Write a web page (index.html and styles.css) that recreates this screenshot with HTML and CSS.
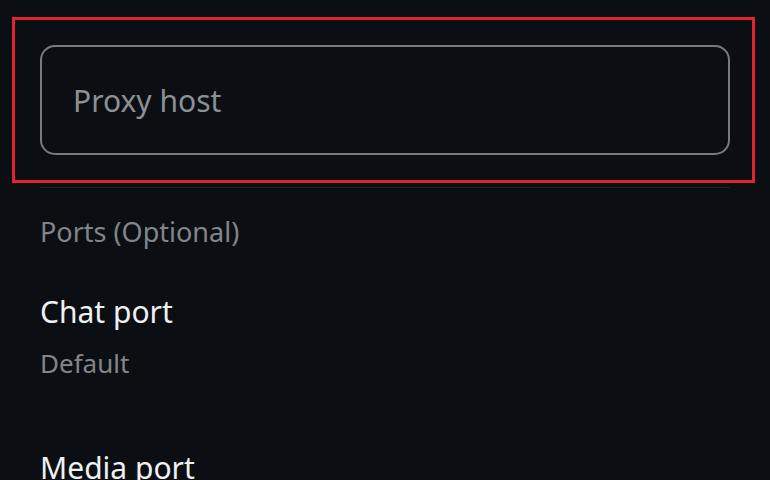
FILE: index.html
```html
<!DOCTYPE html>
<html lang="en">
<head>
    <meta charset="UTF-8">
    <meta name="viewport" content="width=device-width, initial-scale=1.0">
    <title>Proxy settings</title>
    <link rel="stylesheet" href="styles.css">
</head>
<body>
    <div class="screen">
        <div class="host-row">
            <div class="field">
                <span class="placeholder">Proxy host</span>
            </div>
            <div class="highlight"></div>
        </div>
        <div class="divider"></div>

        <div class="section-title">Ports (Optional)</div>

        <div class="pref">
            <div class="pref-title">Chat port</div>
            <div class="pref-summary">Default</div>
        </div>

        <div class="pref">
            <div class="pref-title">Media port</div>
        </div>
    </div>
</body>
</html>
```

FILE: styles.css
```css
html, body {
    margin: 0;
    padding: 0;
}
body {
    background-color: #0b0f13;
    font-family: "Noto Sans", "Open Sans", sans-serif;
    overflow: hidden;
    height: 480px;
}
.screen {
    padding: 0 40px;
}
.host-row {
    position: relative;
    padding-top: 45px;
}
.field {
    height: 106px;
    border: 2px solid #767b80;
    border-radius: 15px;
    display: flex;
    align-items: center;
    padding-left: 31px;
}
.placeholder {
    font-size: 30px;
    color: #8b9095;
}
.highlight {
    position: absolute;
    left: -28px;
    right: -25px;
    top: 17px;
    height: 160px;
    border: 3.5px solid #e0232c;
}
.divider {
    margin-top: 32px;
    height: 1px;
    background-color: #1c2226;
}
.section-title {
    margin-top: 26px;
    font-size: 27px;
    line-height: 36px;
    color: #80868b;
}
.pref {
    padding-top: 42px;
}
.pref-title {
    font-size: 30px;
    line-height: 40px;
    color: #eef0f1;
}
.pref-summary {
    margin-top: 14px;
    font-size: 26px;
    line-height: 34px;
    color: #80868b;
}
.pref + .pref {
    padding-top: 68px;
}
```
